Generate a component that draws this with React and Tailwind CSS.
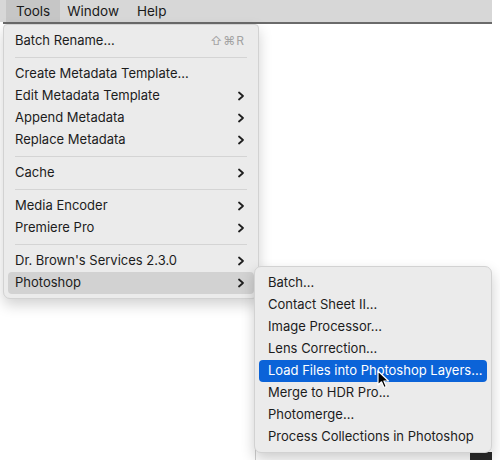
import React from 'react';

const font = { fontFamily: 'Inter, "Helvetica Neue", Arial, sans-serif' };

const Chevron = () => (
    <svg width="8" height="10" viewBox="0 0 8 10" className="shrink-0">
        <polyline points="2,1.5 6,5 2,8.5" fill="none" stroke="#1f1f1f" strokeWidth="1.8" strokeLinecap="round" strokeLinejoin="round" />
    </svg>
);

const Cursor = () => (
    <svg width="14" height="20" viewBox="0 0 14 20" className="absolute left-[377px] top-[370px] z-20">
        <path d="M1 1 L1 15 L4.5 11.8 L7 17.5 L9.3 16.5 L6.9 11 L11.5 11 Z" fill="#000" stroke="#fff" strokeWidth="1.2" strokeLinejoin="round" />
    </svg>
);

const mainItems = [
    { label: 'Batch Rename...', shortcut: '⇧⌘R' },
    { sep: true },
    { label: 'Create Metadata Template...' },
    { label: 'Edit Metadata Template', sub: true },
    { label: 'Append Metadata', sub: true },
    { label: 'Replace Metadata', sub: true },
    { sep: true },
    { label: 'Cache', sub: true },
    { sep: true },
    { label: 'Media Encoder', sub: true },
    { label: 'Premiere Pro', sub: true },
    { sep: true },
    { label: "Dr. Brown's Services 2.3.0", sub: true },
    { label: 'Photoshop', sub: true, active: true },
];

const subItems = [
    'Batch...',
    'Contact Sheet II...',
    'Image Processor...',
    'Lens Correction...',
    'Load Files into Photoshop Layers...',
    'Merge to HDR Pro...',
    'Photomerge...',
    'Process Collections in Photoshop',
];

export default function App() {
    return (
        <div className="relative w-[500px] h-[460px] bg-white overflow-hidden text-[13px] text-[#1c1c1c]" style={font}>
            {/* menu bar */}
            <div className="flex items-center h-[22px] w-[492px] bg-[#d7d7d7] text-[13.5px] text-[#1a1a1a]">
                <div className="ml-[6px] h-full flex items-center px-[10px] bg-[#c6c6c6]">Tools</div>
                <div className="h-full flex items-center px-[7px]">Window</div>
                <div className="h-full flex items-center px-[11px]">Help</div>
            </div>
            <div className="ml-[3px] w-[489px] h-[2px] bg-[#6a6a6a]" />

            {/* content peeking behind */}
            <div className="absolute left-[255px] top-[290px] w-px h-[170px] bg-[#cfcfcf]" />
            <div className="absolute left-[470px] top-[452px] w-[22px] h-[8px] bg-[#2a2a2a]" />

            {/* main menu */}
            <div className="absolute left-[3px] top-[24px] w-[256px] bg-[#ebebeb] rounded-b-[7px] rounded-t-[4px] border border-[#d2d2d2] shadow-[0_6px_14px_rgba(0,0,0,0.18)] pt-[5px] pb-[4px] z-10">
                {mainItems.map((it, i) =>
                    it.sep ? (
                        <div key={i} className="h-[11px] flex items-center px-[11px]">
                            <div className="w-full h-px bg-[#d4d4d4]" />
                        </div>
                    ) : (
                        <div
                            key={i}
                            className={`mx-[4px] h-[22px] flex items-center justify-between pl-[7px] pr-[9px] rounded-[4px] whitespace-nowrap ${it.active ? 'bg-[#d2d2d2]' : ''}`}
                        >
                            <span>{it.label}</span>
                            {it.shortcut && <span className="text-[#a3a3a3] text-[12px] tracking-[1px]">{it.shortcut}</span>}
                            {it.sub && <Chevron />}
                        </div>
                    )
                )}
            </div>

            {/* photoshop submenu */}
            <div className="absolute left-[254px] top-[266px] w-[238px] bg-[#ebebeb] rounded-[7px] border border-[#d2d2d2] shadow-[0_6px_14px_rgba(0,0,0,0.2)] pt-[5px] pb-[4px] z-10">
                {subItems.map((label, i) => (
                    <div
                        key={i}
                        className={`mx-[4px] h-[22px] flex items-center px-[9px] rounded-[4px] whitespace-nowrap ${i === 4 ? 'bg-[#0b63d8] text-white' : ''}`}
                    >
                        {label}
                    </div>
                ))}
            </div>
            <Cursor />
        </div>
    );
}
